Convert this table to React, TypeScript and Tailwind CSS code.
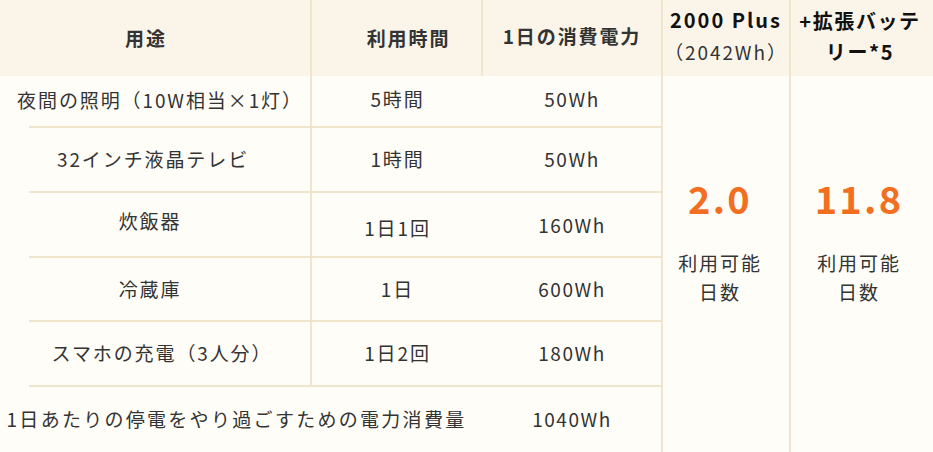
const rows = [
  { use: '夜間の照明（10W相当×1灯）', time: '5時間', power: '50Wh', h: 'h-[52px]', useFix: 'pl-[10px] pb-[2px]', timeFix: 'pb-[4px]', powerFix: 'pb-[4px]' },
  { use: '32インチ液晶テレビ', time: '1時間', power: '50Wh', h: 'h-[65px]', useFix: 'pr-[4px]', timeFix: '', powerFix: '' },
  { use: '炊飯器', time: '1日1回', power: '160Wh', h: 'h-[65px]', useFix: 'pr-[10px] pb-[6px]', timeFix: 'pt-[8px]', powerFix: 'pt-[2px]' },
  { use: '冷蔵庫', time: '1日', power: '600Wh', h: 'h-[64px]', useFix: 'pr-[10px]', timeFix: '', powerFix: '' },
  { use: 'スマホの充電（3人分）', time: '1日2回', power: '180Wh', h: 'h-[65px]', useFix: 'pl-[14px]', timeFix: '', powerFix: '' },
];

function DaysCell({ value, shift }: { value: string; shift: string }) {
  return (
    <div className={`flex flex-col items-center border-l-2 border-[#efe5cc] pt-[102px] ${shift}`}>
      <p className="text-[38px] font-bold leading-[40px] tracking-[0.06em] text-[#f26f21]">{value}</p>
      <p className="mt-[30px] text-center text-[19px] leading-[29px] tracking-[0.1em] text-[#333]">
        利用可能
        <br />
        日数
      </p>
    </div>
  );
}

export default function App() {
  return (
    <div
      className="h-[452px] w-[933px] overflow-hidden bg-[#fffdf7] text-[#333]"
      style={{ fontFamily: '"Noto Sans CJK JP", "Noto Sans", sans-serif' }}
    >
      <div className="grid h-full grid-cols-[312px_171px_178px_128px_144px] grid-rows-[76px_1fr]">
        {/* header */}
        <div className="flex items-center justify-center border-r-2 border-[#efe5cc] bg-[#fbf5e9] pr-[18px] text-[19px] font-bold tracking-[0.1em]">
          用途
        </div>
        <div className="flex items-center justify-center border-r-2 border-[#efe5cc] bg-[#fbf5e9] pl-[24px] text-[19px] font-bold tracking-[0.1em]">
          利用時間
        </div>
        <div className="flex items-center justify-center bg-[#fbf5e9] pb-[4px] text-[19px] font-bold tracking-[0.1em]">
          1日の消費電力
        </div>
        <div className="flex flex-col items-center justify-center border-l-2 border-[#efe5cc] bg-[#fbf5e9] pb-[4px] text-[20px] leading-[32px] text-[#111]">
          <span className="font-bold tracking-[0.1em]">2000 Plus</span>
          <span className="text-[19px] tracking-[0.1em] text-[#333]">（2042Wh）</span>
        </div>
        <div className="flex flex-col items-center justify-center border-l-2 border-[#efe5cc] bg-[#fbf5e9] pb-[4px] pr-[4px] text-[20px] font-bold leading-[31px] tracking-[0.08em] text-[#111]">
          <span>+拡張バッテ</span>
          <span>リー*5</span>
        </div>

        {/* body */}
        <div className="col-span-3 flex flex-col">
          {rows.map((r) => (
            <div key={r.use} className={`grid grid-cols-[312px_171px_178px] ${r.h}`}>
              <div className="flex flex-col border-r-2 border-[#efe5cc]">
                <div className={`flex flex-1 items-center justify-center whitespace-nowrap text-[19px] tracking-[0.1em] ${r.useFix}`}>
                  {r.use}
                </div>
                <div className="ml-[29px] h-[2px] bg-[#efe5cc]" />
              </div>
              <div className={`flex items-center justify-center border-b-2 border-[#efe5cc] text-[19px] tracking-[0.1em] ${r.timeFix}`}>
                {r.time}
              </div>
              <div className={`flex items-center justify-center border-b-2 border-[#efe5cc] text-[19px] tracking-[0.08em] ${r.powerFix}`}>
                {r.power}
              </div>
            </div>
          ))}
          <div className="grid flex-1 grid-cols-[483px_178px]">
            <div className="flex items-center justify-center whitespace-nowrap pr-[10px] text-[19px] tracking-[0.12em]">
              1日あたりの停電をやり過ごすための電力消費量
            </div>
            <div className="flex items-center justify-center text-[19px] tracking-[0.08em]">1040Wh</div>
          </div>
        </div>
        <DaysCell value="2.0" shift="pr-[12px]" />
        <DaysCell value="11.8" shift="pr-[6px]" />
      </div>
    </div>
  );
}
